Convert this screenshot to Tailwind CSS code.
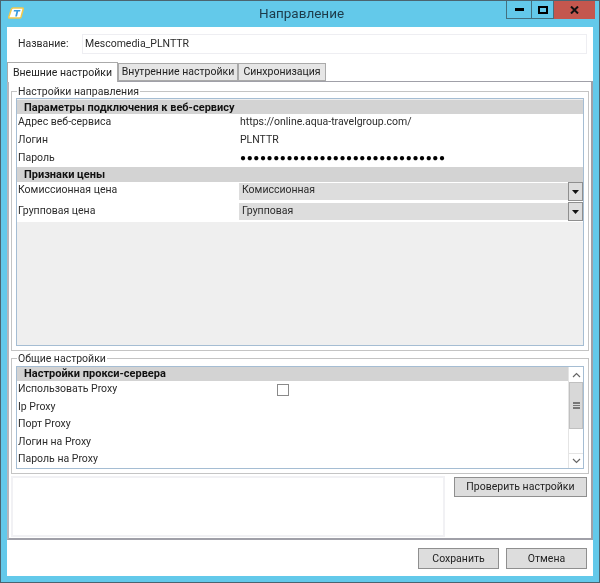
<!DOCTYPE html>
<html lang="ru">
<head>
    <meta charset="UTF-8">
    <title>Направление</title>
    <script src="https://cdn.jsdelivr.net/npm/@tailwindcss/browser@4"></script>
</head>
<body class="bg-[#63c9ea]">
    <div class="w-[600px] h-[583px] flex flex-col bg-[#63c9ea] border border-[#4b6470] font-['Roboto',sans-serif] text-[10.5px] leading-none text-[#2b2b2b] overflow-hidden blur-[0.3px]">

        <!-- title bar -->
        <div class="h-[26px] flex shrink-0">
            <div class="w-[505px] flex">
                <svg class="ml-[7px] mt-[6px]" width="16" height="12" viewBox="0 0 16 12">
                    <path d="M5 1h9.500q1 0 .7 1L13 10q-.3 1-1.300 1H1.500q-1 0-.7-1L3.500 2q.3-1 1.500-1z" fill="#fff" stroke="#f2c94c" stroke-width="1.500"/>
                    <path d="M6 3h6.500l-.4 1.500H10.200L9 9.500H7.200l1.200-5H5.600z" fill="#3a9be0"/>
                </svg>
                <div class="ml-[235px] mt-[6px] text-[13.500px] text-[#1d3b4a]">Направление</div>
            </div>
            <div class="flex h-[18px]">
                <div class="w-[25px] h-full border-l border-b border-[#44707f] flex items-center justify-center"><div class="w-[9px] h-[3px] bg-black"></div></div>
                <div class="w-[23px] h-full border-x border-b border-[#44707f] flex items-center justify-center"><div class="w-[10px] h-[8px] border-2 border-black"></div></div>
                <div class="w-[41px] h-full bg-[#c4574e] flex items-center justify-center">
                    <svg width="9" height="8" viewBox="0 0 9 8"><path d="M1 .5 8 7.500M8 .5 1 7.500" stroke="#111" stroke-width="2"/></svg>
                </div>
            </div>
        </div>

        <!-- client area -->
        <div class="mx-[6px] h-[549px] bg-white flex flex-col">
            <div class="h-[35px] flex items-center shrink-0">
                <span class="ml-[11px] w-[64px]">Название:</span>
                <div class="w-[505px] h-[20px] border border-[#eeeef2] flex items-center pl-[2px] mt-[-1px]">Mescomedia_PLNTTR</div>
            </div>

            <!-- tabs -->
            <div class="h-[19px] flex shrink-0 items-end text-[#222]">
                <div class="w-[111px] h-[20px] pt-[1px] border border-b-0 border-[#aaa] bg-white flex items-center justify-center z-10 mb-[-1px]">Внешние настройки</div>
                <div class="w-[120px] h-[18px] pt-[1px] border border-[#aaa] bg-[#e6e6e6] flex items-center justify-center whitespace-nowrap">Внутренние настройки</div>
                <div class="w-[88px] h-[18px] pt-[1px] border border-[#aaa] bg-[#e6e6e6] flex items-center justify-center">Синхронизация</div>
            </div>

            <!-- tab panel -->
            <div class="h-[459px] shrink-0 border-2 border-t-[1px] border-[#a0a0a8] border-l-[#b5b5bb] px-[2px] pt-[5px] flex flex-col">
                <fieldset class="h-[264px] shrink-0 border border-[#c4c4c4] px-[4px] min-w-0">
                    <legend class="ml-[1px] px-[1px] h-[9px] leading-[9px]">Настройки направления</legend>
                    <div class="h-[248px] mt-[2px] border border-[#a5bdd3] bg-[#efefef] flex flex-col">
                        <div class="h-[14px] mt-[1px] bg-[#d3d3d3] pl-[7px] text-[11px] font-bold flex items-center text-[#111]">Параметры подключения к веб-сервису</div>
                        <div class="bg-white">
                            <div class="h-[18px] pb-[2px] flex items-center"><span class="w-[222px] pl-[1px]">Адрес веб-сервиса</span><span class="ml-[1px]">https://online.aqua-travelgroup.com/</span></div>
                            <div class="h-[17px] pb-[1px] flex items-center"><span class="w-[222px] pl-[1px]">Логин</span><span class="ml-[1px]">PLNTTR</span></div>
                            <div class="h-[18px] flex items-center"><span class="w-[222px] pl-[1px]">Пароль</span><span class="ml-[1px] text-[10px] tracking-[0.59px] text-black">●●●●●●●●●●●●●●●●●●●●●●●●●●●●●●●</span></div>
                        </div>
                        <div class="h-[15px] bg-[#d3d3d3] pl-[7px] text-[11px] font-bold flex items-center text-[#111]">Признаки цены</div>
                        <div class="bg-white pb-[1px]">
                            <div class="h-[19px] flex items-center mb-[1px]">
                                <span class="w-[222px] pl-[1px] pb-[3px]">Комиссионная цена</span>
                                <div class="w-[329px] h-[17px] pb-[2px] bg-[#dddddd] flex items-center pl-[3px]">Комиссионная</div>
                                <div class="w-[15px] h-[19px] bg-[#dddddd] border border-[#8f8f8f] flex items-center justify-center"><svg width="7" height="4" viewBox="0 0 7 4"><path d="M0 0h7L3.500 4z" fill="#111"/></svg></div>
                            </div>
                            <div class="h-[19px] flex items-center">
                                <span class="w-[222px] pl-[1px] pb-[1px]">Групповая цена</span>
                                <div class="w-[329px] h-[17px] pb-[1px] bg-[#dddddd] flex items-center pl-[3px]">Групповая</div>
                                <div class="w-[15px] h-[19px] bg-[#dddddd] border border-[#8f8f8f] flex items-center justify-center"><svg width="7" height="4" viewBox="0 0 7 4"><path d="M0 0h7L3.500 4z" fill="#111"/></svg></div>
                            </div>
                        </div>
                    </div>
                </fieldset>

                <fieldset class="h-[120px] shrink-0 mt-[3px] border border-[#c4c4c4] px-[4px] min-w-0">
                    <legend class="ml-[1px] px-[1px] h-[9px] leading-[9px]">Общие настройки</legend>
                    <div class="h-[103px] mt-[3px] border border-[#a5bdd3] flex">
                        <div class="flex-1 min-w-0 flex flex-col">
                            <div class="h-[14px] bg-[#d3d3d3] pl-[7px] text-[11px] font-bold flex items-center text-[#111]">Настройки прокси-сервера</div>
                            <div class="h-[16px] mt-[1px] flex items-center">
                                <span class="w-[260px] pl-[1px] pb-[1px]">Использовать Proxy</span>
                                <div class="w-[12px] h-[12px] border border-[#8a8a8a] bg-white"></div>
                            </div>
                            <div class="h-[18px] pt-[1px] flex items-center pl-[1px]">Ip Proxy</div>
                            <div class="h-[17px] flex items-center pl-[1px]">Порт Proxy</div>
                            <div class="h-[18px] pt-[1px] flex items-center pl-[1px]">Логин на Proxy</div>
                            <div class="h-[18px] pt-[1px] flex items-center pl-[1px]">Пароль на Proxy</div>
                        </div>
                        <div class="w-[15px] flex flex-col border-l border-[#e4e4e4]">
                            <div class="h-[15px] flex items-center justify-center"><svg width="9" height="6" viewBox="0 0 9 6"><path d="M1 5 4.500 1.500 8 5" fill="none" stroke="#666" stroke-width="1.200"/></svg></div>
                            <div class="h-[47px] bg-[#d8d8d8] border border-[#c0c0c0] flex items-center justify-center"><div class="w-[7px] h-[7px] border-y-2 border-[#777] flex items-center"><div class="w-full h-[1px] bg-[#777]"></div></div></div>
                            <div class="flex-1"></div>
                            <div class="h-[15px] border-t border-[#e4e4e4] flex items-center justify-center"><svg width="9" height="6" viewBox="0 0 9 6"><path d="M1 1 4.500 4.500 8 1" fill="none" stroke="#666" stroke-width="1.200"/></svg></div>
                        </div>
                    </div>
                </fieldset>

                <div class="flex mt-[2px]">
                    <div class="w-[434px] h-[61px] border-2 border-[#f1f1f4] bg-white"></div>
                    <button class="ml-[9px] mt-[1px] w-[133px] h-[20px] pt-[1px] bg-[#dddddd] border border-[#8f8f8f] text-[#222]">Проверить настройки</button>
                </div>
            </div>

            <!-- footer -->
            <div class="flex justify-end gap-[7px] pr-[6px] pt-[8px]">
                <button class="w-[81px] h-[21px] pt-[1px] bg-[#dddddd] border border-[#8f8f8f] text-[#222]">Сохранить</button>
                <button class="w-[81px] h-[21px] pt-[1px] bg-[#dddddd] border border-[#8f8f8f] text-[#222]">Отмена</button>
            </div>
        </div>
    </div>
</body>
</html>
